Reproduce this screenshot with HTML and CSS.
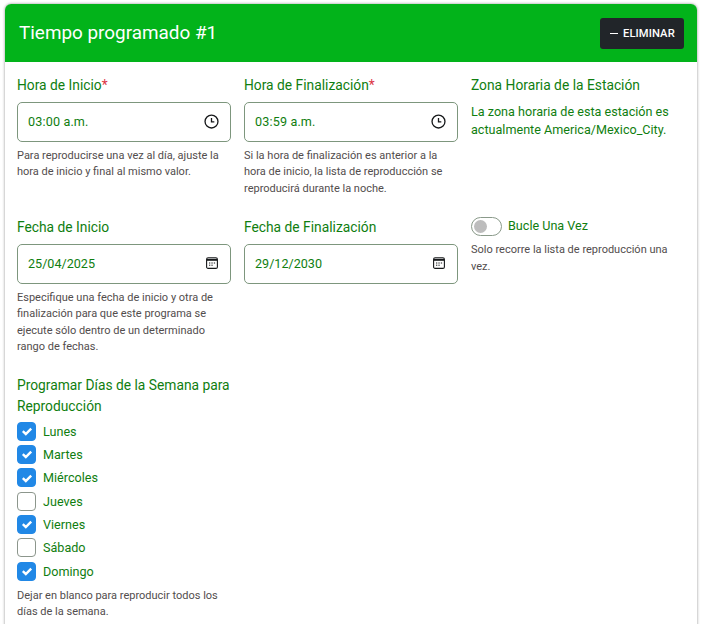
FILE: index.html
```html
<!DOCTYPE html>
<html lang="es">
<head>
<meta charset="utf-8">
<title>Tiempo programado</title>
<link rel="stylesheet" href="styles.css">
</head>
<body>
<section class="card">
  <header class="card-head">
    <h2 class="card-title">Tiempo programado #1</h2>
    <button class="btn-delete" type="button"><span class="dash"></span>ELIMINAR</button>
  </header>
  <div class="card-body">
    <div class="grid">
      <div class="field">
        <div class="label">Hora de Inicio<span class="req">*</span></div>
        <div class="input input-time"><span>03:00 a.m.</span>
          <svg class="ico-clock" viewBox="0 0 16 16"><circle cx="8" cy="8" r="6.9" fill="none" stroke="#16181a" stroke-width="1.4"/><path d="M8 4.2V8.3H11" fill="none" stroke="#16181a" stroke-width="1.4"/></svg>
        </div>
        <p class="help">Para reproducirse una vez al día, ajuste la hora de inicio y final al mismo valor.</p>
      </div>
      <div class="field">
        <div class="label">Hora de Finalización<span class="req">*</span></div>
        <div class="input input-time"><span>03:59 a.m.</span>
          <svg class="ico-clock" viewBox="0 0 16 16"><circle cx="8" cy="8" r="6.9" fill="none" stroke="#16181a" stroke-width="1.4"/><path d="M8 4.2V8.3H11" fill="none" stroke="#16181a" stroke-width="1.4"/></svg>
        </div>
        <p class="help">Si la hora de finalización es anterior a la hora de inicio, la lista de reproducción se reproducirá durante la noche.</p>
      </div>
      <div class="field">
        <div class="label">Zona Horaria de la Estación</div>
        <p class="tz">La zona horaria de esta estación es actualmente America/Mexico_City.</p>
      </div>

      <div class="field field-dates">
        <div class="label">Fecha de Inicio</div>
        <div class="input"><span>25/04/2025</span>
          <svg class="ico-cal" viewBox="0 0 12 12"><rect x="0.6" y="0.8" width="10.8" height="10.6" rx="1.5" fill="none" stroke="#16181a" stroke-width="1.1"/><path d="M1 2.8H11" stroke="#16181a" stroke-width="2"/><path d="M3 6h1.3M5.4 6h1.3M7.8 6h1.3M3 8.2h1.3M5.4 8.2h1.3" stroke="#16181a" stroke-width="1"/></svg>
        </div>
        <p class="help">Especifique una fecha de inicio y otra de finalización para que este programa se ejecute sólo dentro de un determinado rango de fechas.</p>
      </div>
      <div class="field field-dates">
        <div class="label">Fecha de Finalización</div>
        <div class="input"><span>29/12/2030</span>
          <svg class="ico-cal" viewBox="0 0 12 12"><rect x="0.6" y="0.8" width="10.8" height="10.6" rx="1.5" fill="none" stroke="#16181a" stroke-width="1.1"/><path d="M1 2.8H11" stroke="#16181a" stroke-width="2"/><path d="M3 6h1.3M5.4 6h1.3M7.8 6h1.3M3 8.2h1.3M5.4 8.2h1.3" stroke="#16181a" stroke-width="1"/></svg>
        </div>
      </div>
      <div class="field field-dates">
        <div class="switch-row">
          <span class="switch"><span class="knob"></span></span>
          <span class="switch-label">Bucle Una Vez</span>
        </div>
        <p class="help switch-help">Solo recorre la lista de reproducción una vez.</p>
      </div>

      <div class="field">
        <div class="label label-days">Programar Días de la Semana para Reproducción</div>
        <ul class="days">
          <li class="day"><span class="box on"><svg viewBox="0 0 12 12"><path d="M1.8 6.2 4.8 9 10.2 3.6"/></svg></span>Lunes</li>
          <li class="day"><span class="box on"><svg viewBox="0 0 12 12"><path d="M1.8 6.2 4.8 9 10.2 3.6"/></svg></span>Martes</li>
          <li class="day"><span class="box on"><svg viewBox="0 0 12 12"><path d="M1.8 6.2 4.8 9 10.2 3.6"/></svg></span>Miércoles</li>
          <li class="day"><span class="box"></span>Jueves</li>
          <li class="day"><span class="box on"><svg viewBox="0 0 12 12"><path d="M1.8 6.2 4.8 9 10.2 3.6"/></svg></span>Viernes</li>
          <li class="day"><span class="box"></span>Sábado</li>
          <li class="day"><span class="box on"><svg viewBox="0 0 12 12"><path d="M1.8 6.2 4.8 9 10.2 3.6"/></svg></span>Domingo</li>
        </ul>
        <p class="help days-help">Dejar en blanco para reproducir todos los días de la semana.</p>
      </div>
    </div>
  </div>
</section>
</body>
</html>
```
FILE: styles.css
```css
* { box-sizing: border-box; }
html, body { height: 624px; overflow: hidden; }
body {
  margin: 0;
  padding: 4px 4px 0 5px;
  background: #fff;
  font-family: Roboto, "Liberation Sans", sans-serif;
  color: #107e10;
}
.card {
  width: 692px;
  height: 640px;
  background: #fff;
  border-radius: 6px 6px 0 0;
  box-shadow: 0 0 3px rgba(0,0,0,.45);
  overflow: hidden;
}
.card-head {
  height: 58px;
  background: #02b31a;
  display: flex;
  align-items: center;
  justify-content: space-between;
  padding: 0 13px 0 14px;
}
.card-title {
  margin: 0;
  padding-bottom: 2px;
  font-size: 18.9px;
  font-weight: 400;
  color: #fff;
}
.btn-delete {
  width: 84px;
  height: 31px;
  border: 0;
  padding: 0 0 0 10px;
  border-radius: 3px;
  background: #212529;
  color: #fff;
  font-family: inherit;
  font-size: 11.2px;
  font-weight: 500;
  letter-spacing: 0.1px;
  display: flex;
  align-items: center;
  gap: 5px;
}
.dash { width: 8px; height: 1px; background: #fff; }
.card-body { padding: 13px 12px 0; }
.grid {
  display: grid;
  grid-template-columns: 214px 214px 214px;
  column-gap: 13px;
  align-items: start;
}
.field { padding-bottom: 20px; }
.field-dates { padding-bottom: 19px; }
.label { font-size: 13.8px; line-height: 21px; }
.label-days { margin-bottom: 3px; }
.req { color: #dc3545; }
.input {
  margin-top: 6px;
  height: 40px;
  border: 1px solid #7d967d;
  border-radius: 5px;
  display: flex;
  align-items: center;
  justify-content: space-between;
  padding: 0 11px 2px 10px;
  font-size: 12.6px;
}
.input-time { letter-spacing: 0.15px; }
.ico-clock { width: 15px; height: 15px; }
.ico-cal { width: 12px; height: 12px; margin-right: 1px; }
.help {
  margin: 5.5px 0 0;
  font-size: 11px;
  line-height: 16.5px;
  color: #524d4d;
}
.tz {
  margin: 6.5px 0 0;
  font-size: 12.6px;
  line-height: 18.9px;
}
.switch-row { display: flex; align-items: center; gap: 6px; height: 19px; }
.switch {
  width: 31px;
  height: 19px;
  border: 1px solid #8a9a8a;
  border-radius: 10px;
  display: flex;
  align-items: center;
  padding-left: 2px;
}
.knob { width: 13px; height: 13px; border-radius: 50%; background: #bdbdbd; }
.switch-label { font-size: 12.6px; padding-bottom: 3px; }
.switch-help { margin-top: 6px; }
.days { list-style: none; margin: 0; padding: 0; }
.day {
  display: flex;
  align-items: center;
  gap: 7px;
  height: 23.33px;
  font-size: 12.6px;
}
.box {
  width: 19px;
  height: 19px;
  border: 1px solid #8c968c;
  border-radius: 4px;
  display: flex;
  align-items: center;
  justify-content: center;
}
.box.on { background: #2188e6; border-color: #2188e6; }
.box svg { width: 12px; height: 12px; fill: none; stroke: #fff; stroke-width: 2.4; }
.days-help { margin-top: 5px; }
```
